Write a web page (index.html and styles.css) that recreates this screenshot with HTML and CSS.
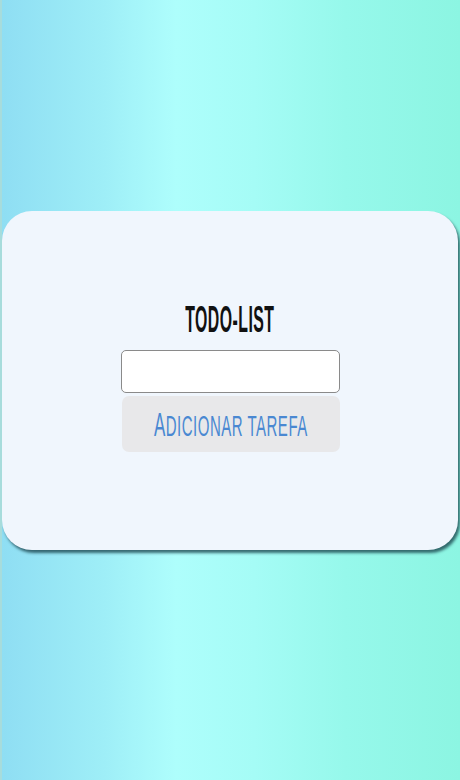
FILE: index.html
```html
<!DOCTYPE html>
<html lang="pt-BR">
<head>
<meta charset="utf-8">
<title>Todo-List</title>
<link rel="stylesheet" href="styles.css">
</head>
<body>
  <main class="card">
    <h1 class="title"><span class="squeeze">TODO-LIST</span></h1>
    <form class="form">
      <input class="task-input" type="text" aria-label="Tarefa">
      <button class="add-btn" type="button"><span class="squeeze-btn">Adicionar tarefa</span></button>
    </form>
  </main>
</body>
</html>
```
FILE: styles.css
```css
html {
  margin: 0;
  height: 100%;
  background: #a7dcdc;
}
body {
  margin: 0 0 0 2px;
  height: 780px;
  box-sizing: border-box;
  padding-top: 211px;
  background: linear-gradient(to right, #8fdef3 0%, #9eeef7 22%, #aefefc 38%, #a5fcf6 55%, #96f8eb 75%, #8cf5e2 100%);
  font-family: "Liberation Sans", sans-serif;
  overflow: hidden;
}
.card {
  width: 456px;
  height: 339px;
  box-sizing: border-box;
  background: #f0f6fd;
  border-radius: 30px;
  box-shadow: 2px 3px 3px rgba(20, 60, 70, 0.75);
  display: flex;
  flex-direction: column;
  align-items: center;
  justify-content: flex-start;
  padding-top: 95px;
}
.title {
  margin: 0 0 18px;
  height: 26px;
  line-height: 26px;
  font-size: 34px;
  font-weight: 700;
  color: #111;
  display: flex;
  justify-content: center;
  width: 100px;
}
.squeeze {
  display: inline-block;
  transform: scale(0.466, 1.1);
  letter-spacing: 1px;
  white-space: nowrap;
}
.form {
  display: flex;
  flex-direction: column;
  gap: 3px;
}
.task-input {
  width: 219px;
  height: 43px;
  box-sizing: border-box;
  border: 1px solid #8a8a8a;
  border-radius: 5px;
  background: #fff;
  margin: 0;
}
.add-btn {
  width: 218px;
  height: 56px;
  border: none;
  border-radius: 7px;
  background: #e8e8ea;
  color: #4a88d2;
  font-family: "Liberation Sans", sans-serif;
  font-size: 30px;
  font-weight: 400;
  padding: 0;
  margin-left: 1px;
  display: flex;
  align-items: center;
  justify-content: center;
  white-space: nowrap;
}
.squeeze-btn {
  display: inline-block;
  text-transform: uppercase;
  transform: scaleX(0.5);
  letter-spacing: 1px;
  flex-shrink: 0;
}
.squeeze-btn::first-letter {
  font-size: 34px;
}
```
